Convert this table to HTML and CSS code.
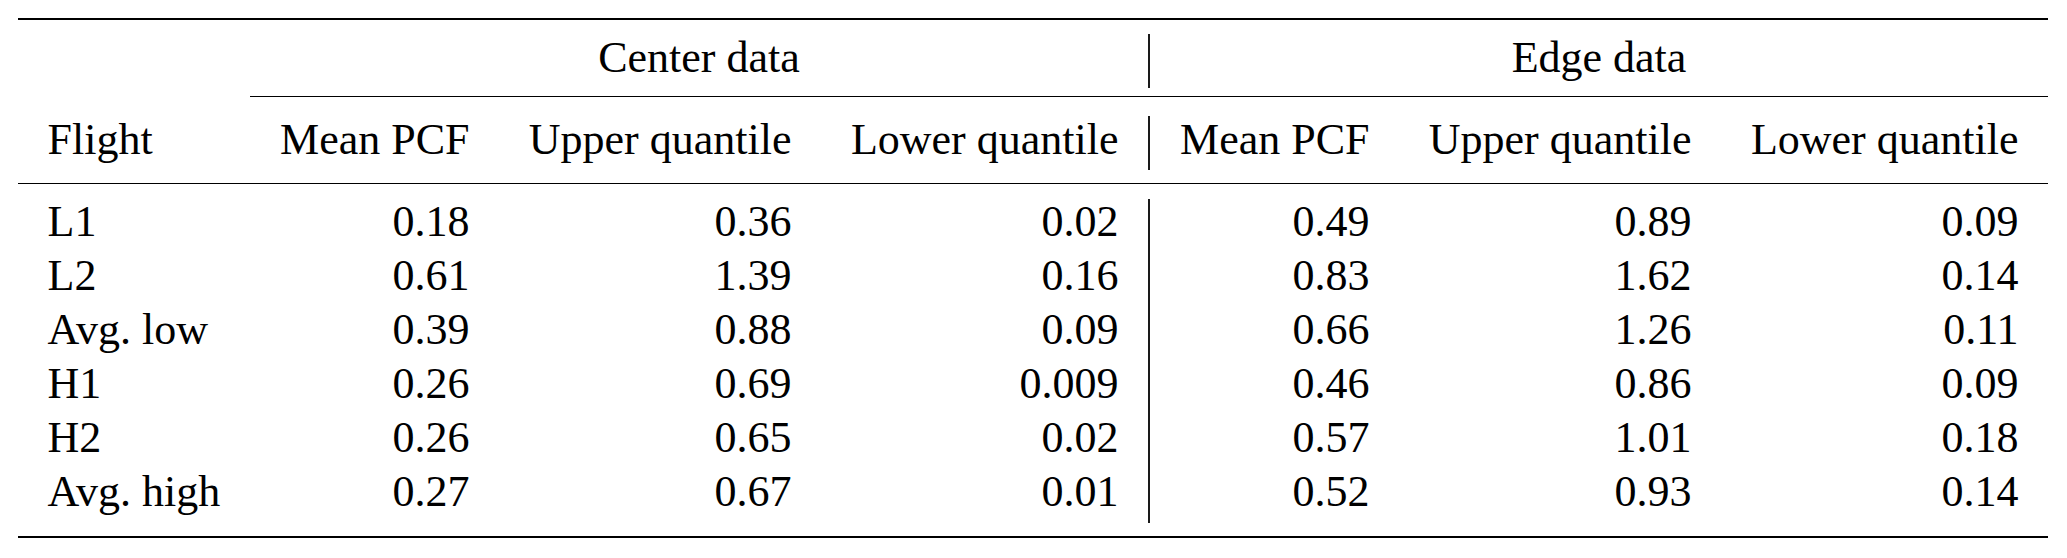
FILE: index.html
```html
<!DOCTYPE html>
<html lang="en">
<head>
<meta charset="utf-8">
<title>PCF table</title>
<link rel="stylesheet" href="styles.css">
</head>
<body>
<div class="tbl">
  <div class="grid groups">
    <div class="cell stub"></div>
    <div class="cell group center-group">Center data</div>
    <div class="vline"></div>
    <div class="cell group edge-group">Edge data</div>
  </div>
  <div class="cmid"></div>
  <div class="grid heads">
    <div class="cell left">Flight</div>
    <div class="cell">Mean PCF</div>
    <div class="cell">Upper quantile</div>
    <div class="cell">Lower quantile</div>
    <div class="vline"></div>
    <div class="cell">Mean PCF</div>
    <div class="cell">Upper quantile</div>
    <div class="cell">Lower quantile</div>
  </div>
  <div class="grid body">
    <div class="vline vline-body"></div>
    <div class="cell left">L1</div><div class="cell">0.18</div><div class="cell">0.36</div><div class="cell">0.02</div>
    <div class="cell">0.49</div><div class="cell">0.89</div><div class="cell">0.09</div>
    <div class="cell left">L2</div><div class="cell">0.61</div><div class="cell">1.39</div><div class="cell">0.16</div>
    <div class="cell">0.83</div><div class="cell">1.62</div><div class="cell">0.14</div>
    <div class="cell left">Avg. low</div><div class="cell">0.39</div><div class="cell">0.88</div><div class="cell">0.09</div>
    <div class="cell">0.66</div><div class="cell">1.26</div><div class="cell">0.11</div>
    <div class="cell left">H1</div><div class="cell">0.26</div><div class="cell">0.69</div><div class="cell">0.009</div>
    <div class="cell">0.46</div><div class="cell">0.86</div><div class="cell">0.09</div>
    <div class="cell left">H2</div><div class="cell">0.26</div><div class="cell">0.65</div><div class="cell">0.02</div>
    <div class="cell">0.57</div><div class="cell">1.01</div><div class="cell">0.18</div>
    <div class="cell left">Avg. high</div><div class="cell">0.27</div><div class="cell">0.67</div><div class="cell">0.01</div>
    <div class="cell">0.52</div><div class="cell">0.93</div><div class="cell">0.14</div>
  </div>
</div>
</body>
</html>
```
FILE: styles.css
```css
html, body {
  margin: 0;
  padding: 0;
  background: #ffffff;
}

body {
  font-family: "Liberation Serif", Tinos, "Times New Roman", Times, "DejaVu Serif", serif;
  font-size: 44px;
  color: #000000;
}

.tbl {
  margin: 18px 0 0 18px;
  width: 2030px;
  border-top: 2px solid #000;
  border-bottom: 2px solid #000;
}

.grid {
  display: grid;
  grid-template-columns: 232px 249px 322px 327px 2px 249px 322px 327px;
  grid-auto-rows: 54px;
}

.cell {
  box-sizing: border-box;
  padding: 0 29.5px;
  text-align: right;
  white-space: nowrap;
  line-height: 48px;
  font-family: "Liberation Serif", Tinos, "Times New Roman", Times, "DejaVu Serif", serif;
}

.cell.left {
  text-align: left;
}

.groups {
  padding: 14px 0 8px;
}

.group {
  text-align: center;
}

.center-group {
  grid-column: 2 / 5;
}

.edge-group {
  grid-column: 6 / 9;
}

.cmid {
  margin-left: 232px;
  border-top: 1.3px solid #000;
}

.heads {
  padding: 18.7px 0 13.5px;
  border-bottom: 1.6px solid #000;
}

.body {
  padding: 15px 0 13px;
}

.body .cell {
  line-height: 45px;
}

.vline {
  justify-self: center;
  width: 1.6px;
  background: #1a1a1a;
}

.vline-body {
  grid-column: 5;
  grid-row: 1 / 7;
}
```
